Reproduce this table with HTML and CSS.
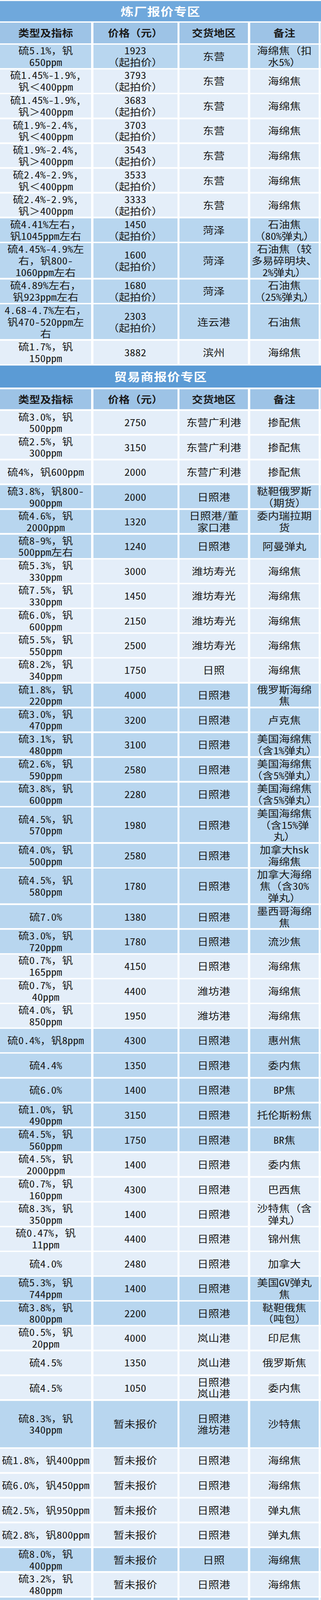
FILE: index.html
```html
<!DOCTYPE html>
<html lang="zh-CN">
<head>
<meta charset="utf-8">
<title>报价专区</title>
<link rel="stylesheet" href="styles.css">
</head>
<body>
<div class="frame">
<div class="sheet">
  <div class="title t1">炼厂报价专区</div>
  <div class="row head"><div><span>类型及指标</span></div><div><span>价格（元）</span></div><div><span>交货地区</span></div><div><span>备注</span></div><div class="stub"></div></div>
  <div class="row mid"><div><span>硫5.1%，钒<br>650ppm</span></div><div><span>1923<br>（起拍价）</span></div><div><span>东营</span></div><div><span>海绵焦（扣<br>水5%）</span></div><div class="stub"></div></div>
  <div class="row light"><div><span>硫1.45%-1.9%,<br>钒＜400ppm</span></div><div><span>3793<br>（起拍价）</span></div><div><span>东营</span></div><div><span>海绵焦</span></div><div class="stub"></div></div>
  <div class="row light"><div><span>硫1.45%-1.9%,<br>钒＞400ppm</span></div><div><span>3683<br>（起拍价）</span></div><div><span>东营</span></div><div><span>海绵焦</span></div><div class="stub"></div></div>
  <div class="row light"><div><span>硫1.9%-2.4%,<br>钒＜400ppm</span></div><div><span>3703<br>（起拍价）</span></div><div><span>东营</span></div><div><span>海绵焦</span></div><div class="stub"></div></div>
  <div class="row light"><div><span>硫1.9%-2.4%,<br>钒＞400ppm</span></div><div><span>3543<br>（起拍价）</span></div><div><span>东营</span></div><div><span>海绵焦</span></div><div class="stub"></div></div>
  <div class="row light"><div><span>硫2.4%-2.9%,<br>钒＜400ppm</span></div><div><span>3533<br>（起拍价）</span></div><div><span>东营</span></div><div><span>海绵焦</span></div><div class="stub"></div></div>
  <div class="row light"><div><span>硫2.4%-2.9%,<br>钒＞400ppm</span></div><div><span>3333<br>（起拍价）</span></div><div><span>东营</span></div><div><span>海绵焦</span></div><div class="stub"></div></div>
  <div class="row mid"><div><span>硫4.41%左右，<br>钒1045ppm左右</span></div><div><span>1450<br>（起拍价）</span></div><div><span>菏泽</span></div><div><span>石油焦<br>（80%弹丸）</span></div><div class="stub"></div></div>
  <div class="row mid l3"><div><span>硫4.45%-4.9%左<br>右，钒800-<br>1060ppm左右</span></div><div><span>1600<br>（起拍价）</span></div><div><span>菏泽</span></div><div><span>石油焦（较<br>多易碎明块、<br>2%弹丸）</span></div><div class="stub"></div></div>
  <div class="row mid"><div><span>硫4.89%左右，<br>钒923ppm左右</span></div><div><span>1680<br>（起拍价）</span></div><div><span>菏泽</span></div><div><span>石油焦<br>（25%弹丸）</span></div><div class="stub"></div></div>
  <div class="row mid l3"><div><span>4.68-4.7%左右，<br>钒470-520ppm左<br>右</span></div><div><span>2303<br>（起拍价）</span></div><div><span>连云港</span></div><div><span>石油焦</span></div><div class="stub"></div></div>
  <div class="row light"><div><span>硫1.7%，钒<br>150ppm</span></div><div><span>3882</span></div><div><span>滨州</span></div><div><span>海绵焦</span></div><div class="stub"></div></div>

  <div class="title t2">贸易商报价专区</div>
  <div class="row head head2"><div><span>类型及指标</span></div><div><span>价格（元）</span></div><div><span>交货地区</span></div><div><span>备注</span></div><div class="stub"></div></div>
  <div class="row light"><div><span>硫3.0%，钒<br>500ppm</span></div><div><span>2750</span></div><div><span>东营广利港</span></div><div><span>掺配焦</span></div><div class="stub"></div></div>
  <div class="row light"><div><span>硫2.5%，钒<br>300ppm</span></div><div><span>3150</span></div><div><span>东营广利港</span></div><div><span>掺配焦</span></div><div class="stub"></div></div>
  <div class="row light"><div><span>硫4%，钒600ppm</span></div><div><span>2000</span></div><div><span>东营广利港</span></div><div><span>掺配焦</span></div><div class="stub"></div></div>
  <div class="row mid"><div><span>硫3.8%，钒800-<br>900ppm</span></div><div><span>2000</span></div><div><span>日照港</span></div><div><span>鞑靼俄罗斯<br>（期货）</span></div><div class="stub"></div></div>
  <div class="row mid"><div><span>硫4.6%，钒<br>2000ppm</span></div><div><span>1320</span></div><div><span>日照港/董<br>家口港</span></div><div><span>委内瑞拉期<br>货</span></div><div class="stub"></div></div>
  <div class="row mid"><div><span>硫8-9%，钒<br>500ppm左右</span></div><div><span>1240</span></div><div><span>日照港</span></div><div><span>阿曼弹丸</span></div><div class="stub"></div></div>
  <div class="row light"><div><span>硫5.3%，钒<br>330ppm</span></div><div><span>3000</span></div><div><span>潍坊寿光</span></div><div><span>海绵焦</span></div><div class="stub"></div></div>
  <div class="row light"><div><span>硫7.5%，钒<br>330ppm</span></div><div><span>1450</span></div><div><span>潍坊寿光</span></div><div><span>海绵焦</span></div><div class="stub"></div></div>
  <div class="row light"><div><span>硫6.0%，钒<br>600ppm</span></div><div><span>2150</span></div><div><span>潍坊寿光</span></div><div><span>海绵焦</span></div><div class="stub"></div></div>
  <div class="row light"><div><span>硫5.5%，钒<br>550ppm</span></div><div><span>2500</span></div><div><span>潍坊寿光</span></div><div><span>海绵焦</span></div><div class="stub"></div></div>
  <div class="row light"><div><span>硫8.2%，钒<br>340ppm</span></div><div><span>1750</span></div><div><span>日照</span></div><div><span>海绵焦</span></div><div class="stub"></div></div>
  <div class="row mid"><div><span>硫1.8%，钒<br>220ppm</span></div><div><span>4000</span></div><div><span>日照港</span></div><div><span>俄罗斯海绵<br>焦</span></div><div class="stub"></div></div>
  <div class="row mid"><div><span>硫3.0%，钒<br>470ppm</span></div><div><span>3200</span></div><div><span>日照港</span></div><div><span>卢克焦</span></div><div class="stub"></div></div>
  <div class="row mid"><div><span>硫3.1%，钒<br>480ppm</span></div><div><span>3100</span></div><div><span>日照港</span></div><div><span>美国海绵焦<br>（含1%弹丸）</span></div><div class="stub"></div></div>
  <div class="row mid"><div><span>硫2.6%，钒<br>590ppm</span></div><div><span>2580</span></div><div><span>日照港</span></div><div><span>美国海绵焦<br>（含5%弹丸）</span></div><div class="stub"></div></div>
  <div class="row mid"><div><span>硫3.8%，钒<br>600ppm</span></div><div><span>2280</span></div><div><span>日照港</span></div><div><span>美国海绵焦<br>（含5%弹丸）</span></div><div class="stub"></div></div>
  <div class="row mid l3"><div><span>硫4.5%，钒<br>570ppm</span></div><div><span>1980</span></div><div><span>日照港</span></div><div><span>美国海绵焦<br>（含15%弹<br>丸）</span></div><div class="stub"></div></div>
  <div class="row mid"><div><span>硫4.0%，钒<br>500ppm</span></div><div><span>2580</span></div><div><span>日照港</span></div><div><span>加拿大hsk<br>海绵焦</span></div><div class="stub"></div></div>
  <div class="row mid l3"><div><span>硫4.5%，钒<br>580ppm</span></div><div><span>1780</span></div><div><span>日照港</span></div><div><span>加拿大海绵<br>焦（含30%<br>弹丸）</span></div><div class="stub"></div></div>
  <div class="row mid"><div><span>硫7.0%</span></div><div><span>1380</span></div><div><span>日照港</span></div><div><span>墨西哥海绵<br>焦</span></div><div class="stub"></div></div>
  <div class="row mid"><div><span>硫3.0%，钒<br>720ppm</span></div><div><span>1780</span></div><div><span>日照港</span></div><div><span>流沙焦</span></div><div class="stub"></div></div>
  <div class="row light"><div><span>硫0.7%，钒<br>165ppm</span></div><div><span>4150</span></div><div><span>日照港</span></div><div><span>海绵焦</span></div><div class="stub"></div></div>
  <div class="row light"><div><span>硫0.7%，钒<br>40ppm</span></div><div><span>4400</span></div><div><span>潍坊港</span></div><div><span>海绵焦</span></div><div class="stub"></div></div>
  <div class="row light"><div><span>硫4.0%，钒<br>850ppm</span></div><div><span>1950</span></div><div><span>潍坊港</span></div><div><span>海绵焦</span></div><div class="stub"></div></div>
  <div class="row mid"><div><span>硫0.4%，钒8ppm</span></div><div><span>4300</span></div><div><span>日照港</span></div><div><span>惠州焦</span></div><div class="stub"></div></div>
  <div class="row mid"><div><span>硫4.4%</span></div><div><span>1350</span></div><div><span>日照港</span></div><div><span>委内焦</span></div><div class="stub"></div></div>
  <div class="row mid"><div><span>硫6.0%</span></div><div><span>1400</span></div><div><span>日照港</span></div><div><span>BP焦</span></div><div class="stub"></div></div>
  <div class="row mid"><div><span>硫1.0%，钒<br>490ppm</span></div><div><span>3150</span></div><div><span>日照港</span></div><div><span>托伦斯粉焦</span></div><div class="stub"></div></div>
  <div class="row mid"><div><span>硫4.5%，钒<br>560ppm</span></div><div><span>1750</span></div><div><span>日照港</span></div><div><span>BR焦</span></div><div class="stub"></div></div>
  <div class="row light"><div><span>硫4.5%，钒<br>2000ppm</span></div><div><span>1400</span></div><div><span>日照港</span></div><div><span>委内焦</span></div><div class="stub"></div></div>
  <div class="row light"><div><span>硫0.7%，钒<br>160ppm</span></div><div><span>4300</span></div><div><span>日照港</span></div><div><span>巴西焦</span></div><div class="stub"></div></div>
  <div class="row light"><div><span>硫8.3%，钒<br>350ppm</span></div><div><span>1400</span></div><div><span>日照港</span></div><div><span>沙特焦（含<br>弹丸）</span></div><div class="stub"></div></div>
  <div class="row light"><div><span>硫0.47%，钒<br>11ppm</span></div><div><span>4400</span></div><div><span>日照港</span></div><div><span>锦州焦</span></div><div class="stub"></div></div>
  <div class="row light"><div><span>硫4.0%</span></div><div><span>2480</span></div><div><span>日照港</span></div><div><span>加拿大</span></div><div class="stub"></div></div>
  <div class="row mid"><div><span>硫5.3%，钒<br>744ppm</span></div><div><span>1400</span></div><div><span>日照港</span></div><div><span>美国GV弹丸<br>焦</span></div><div class="stub"></div></div>
  <div class="row mid"><div><span>硫3.8%，钒<br>800ppm</span></div><div><span>2200</span></div><div><span>日照港</span></div><div><span>鞑靼俄焦<br>（吨包）</span></div><div class="stub"></div></div>
  <div class="row light"><div><span>硫0.5%，钒<br>20ppm</span></div><div><span>4000</span></div><div><span>岚山港</span></div><div><span>印尼焦</span></div><div class="stub"></div></div>
  <div class="row light"><div><span>硫4.5%</span></div><div><span>1350</span></div><div><span>岚山港</span></div><div><span>俄罗斯焦</span></div><div class="stub"></div></div>
  <div class="row light"><div><span>硫4.5%</span></div><div><span>1050</span></div><div><span>日照港<br>岚山港</span></div><div><span>委内焦</span></div><div class="stub"></div></div>
  <div class="row mid tall"><div><span>硫8.3%，钒<br>340ppm</span></div><div><span>暂未报价</span></div><div><span>日照港<br>潍坊港</span></div><div><span>沙特焦</span></div><div class="stub"></div></div>
  <div class="row light"><div><span>硫1.8%，钒400ppm</span></div><div><span>暂未报价</span></div><div><span>日照港</span></div><div><span>海绵焦</span></div><div class="stub"></div></div>
  <div class="row light"><div><span>硫6.0%，钒450ppm</span></div><div><span>暂未报价</span></div><div><span>日照港</span></div><div><span>海绵焦</span></div><div class="stub"></div></div>
  <div class="row light"><div><span>硫2.5%，钒950ppm</span></div><div><span>暂未报价</span></div><div><span>日照港</span></div><div><span>弹丸焦</span></div><div class="stub"></div></div>
  <div class="row light"><div><span>硫2.8%，钒800ppm</span></div><div><span>暂未报价</span></div><div><span>日照港</span></div><div><span>弹丸焦</span></div><div class="stub"></div></div>
  <div class="row mid"><div><span>硫8.0%，钒<br>400ppm</span></div><div><span>暂未报价</span></div><div><span>日照</span></div><div><span>海绵焦</span></div><div class="stub"></div></div>
  <div class="row light"><div><span>硫3.2%，钒<br>480ppm</span></div><div><span>暂未报价</span></div><div><span>日照港</span></div><div><span>海绵焦</span></div><div class="stub"></div></div>
  <div class="row mid end"><div></div><div></div><div></div><div></div><div class="stub"></div></div>
</div>
</div>
<script src="script.js"></script>
</body>
</html>
```

FILE: styles.css
```css
html, body {
  margin: 0;
  padding: 0;
  background: #ffffff;
}
.frame {
  width: 821px;
  height: 100vh;
  overflow: hidden;
}
.sheet {
  display: flex;
  flex-direction: column;
  gap: 4.5px;
  padding-top: 3.3px;
  box-sizing: border-box;
  width: 821px;
  height: 4653px;
  overflow: hidden;
  transform-origin: 0 0;
  transform: scaleY(var(--k, 1));
  font-family: "Noto Sans Mono CJK SC", "Noto Sans CJK SC", "DejaVu Sans", sans-serif;
  font-size: 28px;
  color: #1b1b1b;
}
.title {
  flex: none;
  display: flex;
  align-items: center;
  justify-content: center;
  color: #ffffff;
  font-weight: bold;
  font-size: 33px;
  letter-spacing: 1px;
  white-space: nowrap;
}
.t1 {
  height: 58.5px;
  background: #6fa8dc;
}
.t2 {
  height: 64px;
  background: #5b9bd5;
}
.row {
  flex: none;
  display: grid;
  grid-template-columns: 233.3px 215px 175.6px 175.2px 20px;
  column-gap: 5.3px;
  height: 67.6px;
  width: 860px;
}
.row > div {
  display: flex;
  align-items: center;
  justify-content: center;
}
.row span {
  display: block;
  text-align: center;
  line-height: 33.8px;
  white-space: nowrap;
}
.head {
  height: 59.5px;
  font-weight: bold;
}
.head2 {
  height: 58.5px;
}
.head > div {
  background: #9dc3e6;
}
.mid > div {
  background: #b8d6ef;
}
.light > div {
  background: #e4eef9;
}
.row.l3 {
  height: 101.4px;
}
.row.tall {
  height: 135.2px;
}
.row.end {
  height: 6.6px;
}
```

FILE: script.js
```js
(function () {
  var REF_HEIGHT = 4653;
  function fit() {
    var k = window.innerHeight / REF_HEIGHT;
    if (!(k > 0) || k > 1) {
      k = 1;
    }
    document.documentElement.style.setProperty('--k', String(k));
  }
  fit();
  window.addEventListener('resize', fit);
})();
```
